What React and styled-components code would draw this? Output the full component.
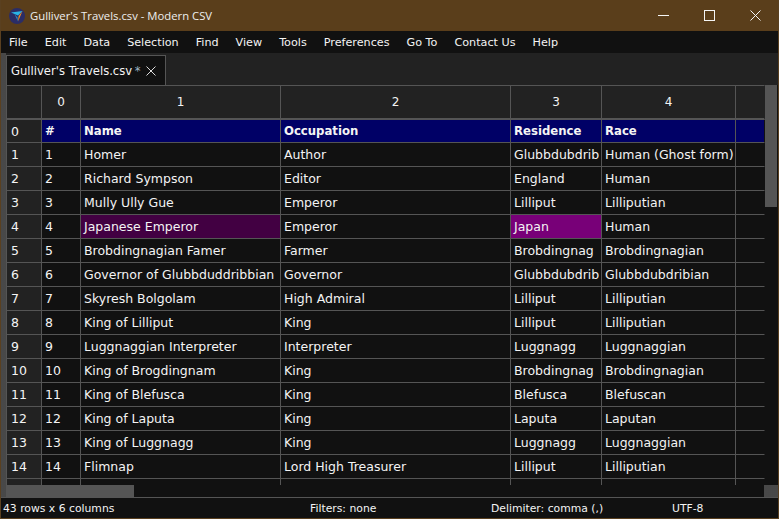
import React from "react";
import styled, { createGlobalStyle } from "styled-components";

const Global = createGlobalStyle`
  html, body { margin: 0; padding: 0; background: #111; }
  * { box-sizing: border-box; }
`;
const FONT = `"DejaVu Sans", sans-serif`;
const LINE = "#555";
const DITHER = `
  background-color: #141414;
  background-image: radial-gradient(circle at 1px 1px, #4a4a4a 0.7px, transparent 0.9px);
  background-size: 2px 2px;
`;

const Window = styled.div`
  width: 779px; height: 519px; display: flex; flex-direction: column;
  background: #111; color: #f4f4f4; font: 12.5px ${FONT};
  border: 1px solid #5a4020; border-top: 0; overflow: hidden;
`;
const TitleBar = styled.div`
  height: 31px; flex: none; background: #5a3e1b; display: flex; align-items: center;
  padding-left: 8px; color: #eee; font: 11.3px "Open Sans", "Noto Sans", sans-serif;
`;
const TitleText = styled.span`margin-left: 5px; flex: 1;`;
const WinButton = styled.button`
  width: 46px; height: 31px; border: 0; background: none; color: #f5f5f5; padding: 0;
  display: flex; align-items: center; justify-content: center;
`;
const MenuBar = styled.div`
  height: 22px; flex: none; background: #111; display: flex; align-items: center; padding-left: 8px; gap: 17px; font-size: 11.2px;
`;
const MenuItem = styled.span`white-space: nowrap;`;
const Workspace = styled.div`flex: 1; min-height: 0; display: flex;`;
const Gutter = styled.div`width: 5px; flex: none; ${DITHER}`;
const Main = styled.div`flex: 1; min-width: 0; display: flex; flex-direction: column;`;
const TabBar = styled.div`height: 32px; flex: none; background: #222; display: flex; align-items: flex-end;`;
const Tab = styled.div`
  width: 160px; height: 30px; background: #111; border: 1px solid ${LINE}; border-bottom: 0;
  display: flex; align-items: center; padding-left: 4px; gap: 5px; white-space: nowrap; font-size: 11.6px;
`;
const TabStar = styled.span`color: #9fb4c4; margin-left: -1px;`;
const Body = styled.div`height: 400px; flex: none; display: flex; background: #111;`;
const Grid = styled.div`
  width: 759px; flex: none; overflow: hidden; display: grid; align-content: start;
  grid-template-columns: 36px 39px 200px 230px 91px 134px 29px;
  grid-template-rows: 35px 23px;
  grid-auto-rows: 24px;
`;
const Corner = styled.div`background: #222; border: 1px solid ${LINE}; border-bottom-width: 2px; border-top-width: 1px;`;
const ColHead = styled.div`
  background: #222; border-top: 1px solid ${LINE}; border-right: 1px solid ${LINE}; border-bottom: 2px solid ${LINE};
  display: flex; align-items: center; justify-content: center; padding-bottom: 1px; font-size: 12px;
  &:nth-child(7) { border-right-color: #222; }
`;
const RowHead = styled.div`
  background: #222; border-right: 1px solid ${LINE}; border-bottom: 1px solid ${LINE}; border-left: 1px solid ${LINE};
  display: flex; align-items: center; padding-left: 4px;
`;
const Cell = styled.div`
  padding-left: 3px; display: flex; align-items: center; white-space: nowrap; overflow: hidden;
  border-right: 1px solid ${p => (p.$last ? "#111" : LINE)}; border-bottom: 1px solid ${LINE};
  background: ${p => p.$bg || "#111"};
  font-weight: ${p => (p.$bold ? 700 : 400)}; font-size: ${p => (p.$bold ? "11.7px" : "12.5px")};
`;
const VScroll = styled.div`width: 13px; flex: none; background: #111;`;
const VThumb = styled.div`width: 12px; height: 122px; background: #555;`;
const HScroll = styled.div`height: 12px; flex: none; background: #111; display: flex; justify-content: space-between;`;
const HThumb = styled.div`width: 128px; background: #555;`;
const Grip = styled.div`width: 14px; ${DITHER}`;
const StatusBar = styled.div`
  height: 21px; flex: none; background: #111; display: grid; font-size: 10.8px; align-items: center;
  border-top: 1px solid ${LINE};
  grid-template-columns: 307px 181px 181px 1fr; padding-left: 2px;
`;

const rows = [
  ["#", "Name", "Occupation", "Residence", "Race", ""],
  ["1", "Homer", "Author", "Glubbdubdrib", "Human (Ghost form)", ""],
  ["2", "Richard Sympson", "Editor", "England", "Human", ""],
  ["3", "Mully Ully Gue", "Emperor", "Lilliput", "Lilliputian", ""],
  ["4", "Japanese Emperor", "Emperor", "Japan", "Human", ""],
  ["5", "Brobdingnagian Famer", "Farmer", "Brobdingnag", "Brobdingnagian", ""],
  ["6", "Governor of Glubbduddribbian", "Governor", "Glubbdubdrib", "Glubbdubdribian", ""],
  ["7", "Skyresh Bolgolam", "High Admiral", "Lilliput", "Lilliputian", ""],
  ["8", "King of Lilliput", "King", "Lilliput", "Lilliputian", ""],
  ["9", "Luggnaggian Interpreter", "Interpreter", "Luggnagg", "Luggnaggian", ""],
  ["10", "King of Brogdingnam", "King", "Brobdingnag", "Brobdingnagian", ""],
  ["11", "King of Blefusca", "King", "Blefusca", "Blefuscan", ""],
  ["12", "King of Laputa", "King", "Laputa", "Laputan", ""],
  ["13", "King of Luggnagg", "King", "Luggnagg", "Luggnaggian", ""],
  ["14", "Flimnap", "Lord High Treasurer", "Lilliput", "Lilliputian", ""],
  ["", "", "", "", "", ""],
];
const menus = ["File", "Edit", "Data", "Selection", "Find", "View", "Tools", "Preferences", "Go To", "Contact Us", "Help"];

const cellBg = (r, c) => {
  if (r === 0) return "#000066";
  if (r === 4 && c === 1) return "#420042";
  if (r === 4 && c === 3) return "#780078";
  return undefined;
};

const Logo = () => (
  <svg width="16" height="16" viewBox="0 0 16 16">
    <circle cx="8" cy="8" r="8" fill="#2b2d66" />
    <path d="M2 4.5 L13.5 3 L9 7.5 L5.5 6 Z" fill="#2bb5e6" />
    <path d="M5.5 6 L9 13.5 L8.5 9.5 Z" fill="#2a8fc4" />
    <path d="M13.5 3 L9 13.5 L9.6 8 Z" fill="#f08a24" />
  </svg>
);

export default function App() {
  return (
    <Window>
      <Global />
      <TitleBar>
        <Logo />
        <TitleText>Gulliver's Travels.csv - Modern CSV</TitleText>
        <WinButton aria-label="Minimize"><svg width="11" height="11"><path d="M0 5.5H11" stroke="currentColor" /></svg></WinButton>
        <WinButton aria-label="Maximize"><svg width="11" height="11"><rect x=".5" y=".5" width="10" height="10" fill="none" stroke="currentColor" /></svg></WinButton>
        <WinButton aria-label="Close"><svg width="11" height="11"><path d="M.5 .5L10.5 10.5M10.5 .5L.5 10.5" stroke="currentColor" /></svg></WinButton>
      </TitleBar>
      <MenuBar>{menus.map(m => <MenuItem key={m}>{m}</MenuItem>)}</MenuBar>
      <Workspace>
        <Gutter />
        <Main>
          <TabBar>
            <Tab>
              <span>Gulliver's Travels.csv <TabStar>*</TabStar></span>
              <svg width="10" height="10"><path d="M.5 .5L9.5 9.5M9.5 .5L.5 9.5" stroke="#ddd" /></svg>
            </Tab>
          </TabBar>
          <Body>
            <Grid>
              <Corner />
              {["0", "1", "2", "3", "4", ""].map((c, i) => <ColHead key={i}>{c}</ColHead>)}
              {rows.map((row, r) => (
                <React.Fragment key={r}>
                  <RowHead>{r < 15 ? r : ""}</RowHead>
                  {row.map((v, c) => <Cell key={c} $bg={cellBg(r, c)} $bold={r === 0} $last={c === 5}>{v}</Cell>)}
                </React.Fragment>
              ))}
            </Grid>
            <VScroll><VThumb /></VScroll>
          </Body>
          <HScroll><HThumb /><Grip /></HScroll>
        </Main>
      </Workspace>
      <StatusBar>
        <span>43 rows x 6 columns</span>
        <span>Filters: none</span>
        <span>Delimiter: comma (,)</span>
        <span>UTF-8</span>
      </StatusBar>
    </Window>
  );
}
